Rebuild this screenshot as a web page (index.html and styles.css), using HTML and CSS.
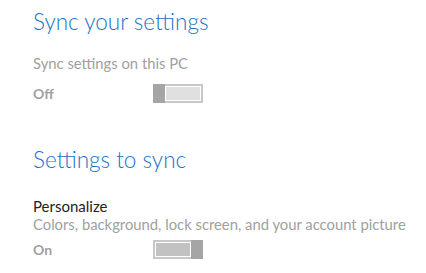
FILE: index.html
```html
<!DOCTYPE html>
<html lang="en">
<head>
    <meta charset="UTF-8">
    <title>Sync your settings</title>
    <link rel="stylesheet" href="styles.css">
</head>
<body>
    <div class="page">
        <h1 class="heading">Sync your settings</h1>
        <div class="setting">
            <div class="setting-desc">Sync settings on this PC</div>
            <div class="toggle-row">
                <span class="toggle-label">Off</span>
                <div class="toggle off">
                    <div class="thumb"></div>
                    <div class="track"></div>
                </div>
            </div>
        </div>

        <h1 class="heading second">Settings to sync</h1>
        <div class="setting">
            <div class="setting-title">Personalize</div>
            <div class="setting-desc tight">Colors, background, lock screen, and your account picture</div>
            <div class="toggle-row on-row">
                <span class="toggle-label">On</span>
                <div class="toggle on">
                    <div class="track"></div>
                    <div class="thumb"></div>
                </div>
            </div>
        </div>
    </div>
</body>
</html>
```

FILE: styles.css
```css
body {
    margin: 0;
    background-color: #fff;
    font-family: Lato, "Open Sans", sans-serif;
}

.page {
    padding: 6px 0 0 33px;
}

.heading {
    margin: 0;
    font-size: 22.5px;
    line-height: 32px;
    font-weight: 300;
    color: #1a72c6;
}

.heading.second {
    margin-top: 41px;
}

.setting-desc {
    margin-top: 15px;
    font-size: 14.8px;
    line-height: 20px;
    color: #a0a0a0;
    white-space: nowrap;
}

.setting-title {
    margin-top: 22px;
    font-size: 15px;
    line-height: 16px;
    color: #222;
}

/* no gap when it follows a title */
.setting-desc.tight {
    margin-top: 0;
}

.toggle-row {
    display: flex;
    align-items: center;
    margin-top: 11px;
}

.toggle-row.on-row {
    margin-top: 6px;
}

.toggle-label {
    width: 120px;
    font-size: 14px;
    line-height: 19px;
    font-weight: 700;
    color: #a0a0a0;
}

.toggle {
    display: flex;
    width: 50px;
    height: 19px;
}

.thumb {
    width: 12px;
    background-color: #a5a5a5;
}

.track {
    flex: 1;
    border: 2px solid #c8c8c8;
    box-shadow: inset 0 0 0 1px #fff;
}

.toggle.off .track {
    border-left: 0;
    background-color: #e0e0e0;
}

.toggle.on .track {
    border-right: 0;
    background-color: #c2c2c2;
}
```
